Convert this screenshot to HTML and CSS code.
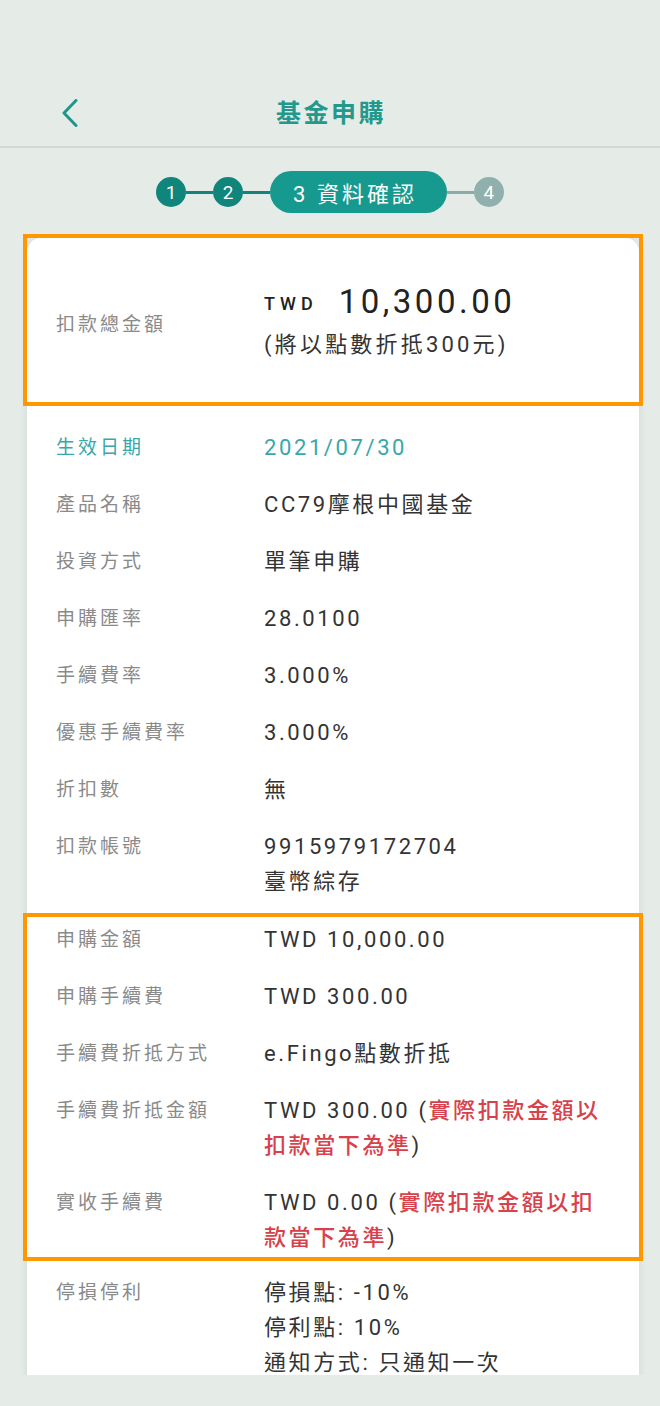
FILE: index.html
```html
<!DOCTYPE html>
<html lang="zh-Hant">
<head>
  <meta charset="UTF-8" />
  <meta name="viewport" content="width=device-width, initial-scale=1.0"/>
  <title>基金申購</title>
  <link rel="stylesheet" href="styles.css">
</head>
<body>
  <header class="topbar">
    <a class="back" href="#" aria-label="返回">
      <svg width="16" height="28" viewBox="0 0 16 28"><polyline points="14,1.5 2,14 14,26.5" /></svg>
    </a>
    <h1>基金申購</h1>
    <span></span>
  </header>

  <main class="content">
    <!-- steps -->
    <div class="steps">
      <div class="dot">1</div>
      <div class="line"></div>
      <div class="dot">2</div>
      <div class="line"></div>
      <div class="current">3 資料確認</div>
      <div class="line todo"></div>
      <div class="dot todo">4</div>
    </div>

    <div class="card">
      <section class="total mark">
        <div class="label">扣款總金額</div>
        <div class="amount">
          <div class="big"><span class="cur">TWD</span>10,300.00</div>
          <div class="note">(將以點數折抵300元)</div>
        </div>
      </section>

      <section class="details">
        <div class="row date">
          <div class="label">生效日期</div>
          <div class="value">2021/07/30</div>
        </div>
        <div class="row">
          <div class="label">產品名稱</div>
          <div class="value">CC79摩根中國基金</div>
        </div>
        <div class="row">
          <div class="label">投資方式</div>
          <div class="value">單筆申購</div>
        </div>
        <div class="row">
          <div class="label">申購匯率</div>
          <div class="value">28.0100</div>
        </div>
        <div class="row">
          <div class="label">手續費率</div>
          <div class="value">3.000%</div>
        </div>
        <div class="row">
          <div class="label">優惠手續費率</div>
          <div class="value">3.000%</div>
        </div>
        <div class="row">
          <div class="label">折扣數</div>
          <div class="value">無</div>
        </div>
        <div class="row">
          <div class="label">扣款帳號</div>
          <div class="value">9915979172704<br>臺幣綜存</div>
        </div>
      </section>

      <section class="details fees mark">
        <div class="row">
          <div class="label">申購金額</div>
          <div class="value">TWD 10,000.00</div>
        </div>
        <div class="row">
          <div class="label">申購手續費</div>
          <div class="value">TWD 300.00</div>
        </div>
        <div class="row">
          <div class="label">手續費折抵方式</div>
          <div class="value">e.Fingo點數折抵</div>
        </div>
        <div class="row">
          <div class="label">手續費折抵金額</div>
          <div class="value">TWD 300.00 (<em class="warn">實際扣款金額以扣款當下為準</em>)</div>
        </div>
        <div class="row">
          <div class="label">實收手續費</div>
          <div class="value">TWD 0.00 (<em class="warn">實際扣款金額以扣款當下為準</em>)</div>
        </div>
      </section>

      <section class="details last">
        <div class="row">
          <div class="label">停損停利</div>
          <div class="value">停損點: -10%<br>停利點: 10%<br>通知方式: 只通知一次</div>
        </div>
      </section>
    </div>
  </main>
</body>
</html>
```

FILE: styles.css
```css
* {
  box-sizing: border-box;
  margin: 0;
  padding: 0;
  font-family: Roboto, "Noto Sans CJK TC", sans-serif;
}

body {
  background: #e5ece7;
  width: 660px;
  height: 1406px;
  overflow: hidden;
}

/* header */
.topbar {
  height: 148px;
  border-bottom: 2px solid #d2d9d4;
  display: grid;
  grid-template-columns: 1fr auto 1fr;
  align-items: end;
  padding-bottom: 15px;
}

.back {
  display: block;
  width: 16px;
  height: 28px;
  margin-left: 62px;
  margin-bottom: 4px;
}

.back svg polyline {
  fill: none;
  stroke: #1f968a;
  stroke-width: 3;
  stroke-linecap: round;
  stroke-linejoin: round;
}

.topbar h1 {
  font-size: 25px;
  line-height: 34px;
  letter-spacing: 2.5px;
  font-weight: 700;
  color: #23998e;
  margin-right: -2px;
}

/* scroll area */
.content {
  height: 1227px;
  overflow: hidden;
}

.steps {
  display: flex;
  align-items: center;
  justify-content: center;
  margin: 23px 0 25px;
  height: 42px;
}

.dot {
  width: 30px;
  height: 30px;
  border-radius: 50%;
  background: #10857b;
  color: #fff;
  font-size: 19px;
  display: flex;
  align-items: center;
  justify-content: center;
}

.dot.todo {
  background: #8fb0ad;
}

.line {
  width: 27px;
  height: 3px;
  background: #10857b;
}

.line.todo {
  background: #8aaba8;
}

.current {
  height: 42px;
  border-radius: 21px;
  background: #16998f;
  color: #fff;
  font-size: 22px;
  letter-spacing: 3px;
  display: flex;
  align-items: center;
  padding: 0 30px 0 23px;
}

/* card */
.card {
  background: #fff;
  margin: 0 21px 0 27px;
  border-radius: 14px 14px 0 0;
  box-shadow: 0 2px 8px rgba(0, 0, 0, 0.09);
}

.mark {
  outline: 4px solid #ff9800;
}

.label {
  font-size: 19px;
  letter-spacing: 3px;
  color: #8a8a8a;
}

.value {
  font-size: 22px;
  letter-spacing: 2.6px;
  color: #333;
}

.total {
  display: grid;
  grid-template-columns: 208px 1fr;
  align-items: center;
  padding: 42px 20px 38px 29px;
}

.amount .big {
  font-size: 33px;
  line-height: 44px;
  letter-spacing: 3.5px;
  color: #222;
}

.amount .cur {
  font-size: 18px;
  font-weight: 500;
  letter-spacing: 5px;
  margin-right: 21px;
  vertical-align: 3px;
}

.amount .note {
  font-size: 22px;
  line-height: 38px;
  letter-spacing: 3.2px;
  color: #333;
}

.details {
  display: flex;
  flex-direction: column;
  gap: 22px;
  padding: 28px 25px 18px 29px;
}

.details.fees {
  padding-top: 5px;
  padding-bottom: 2px;
}

.details.last {
  padding-top: 18px;
  padding-bottom: 30px;
}

.row {
  display: grid;
  grid-template-columns: 208px 1fr;
  line-height: 35px;
}

.row.date .label,
.row.date .value {
  color: #38a7aa;
}

.warn {
  font-style: normal;
  font-weight: 500;
  color: #d8414b;
}
```
